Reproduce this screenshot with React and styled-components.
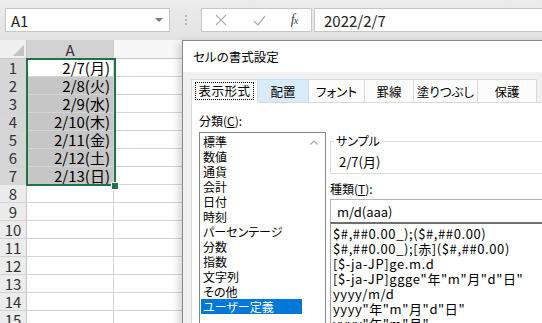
import styled, { createGlobalStyle } from "styled-components";

const GlobalStyle = createGlobalStyle`
  html, body { margin: 0; padding: 0; }
  body {
    font-family: "Noto Sans CJK JP", "Noto Sans", sans-serif;
    background: #fff;
    color: #000;
  }
`;

const Screen = styled.div`
  position: relative;
  width: 542px;
  height: 323px;
  overflow: hidden;
  background: #fff;
  display: flex;
  flex-direction: column;
`;

/* ---------- formula bar ---------- */

const FormulaBar = styled.div`
  flex: none;
  height: 40px;
  box-sizing: border-box;
  display: flex;
  align-items: flex-start;
  padding: 8px 0 0 5px;
  background: linear-gradient(#ebebeb, #e4e4e4);
`;

const NameBox = styled.div`
  width: 165px;
  height: 24px;
  box-sizing: border-box;
  background: #fff;
  border: 1px solid #c6c6c6;
  display: flex;
  align-items: center;
  justify-content: space-between;
  padding: 0 6px 0 5px;
  font-size: 15px;
  color: #222;
`;

const DropArrow = styled.span`
  width: 0;
  height: 0;
  border-left: 4px solid transparent;
  border-right: 4px solid transparent;
  border-top: 4px solid #7a7a7a;
`;

const Grip = styled.div`
  width: 31px;
  height: 24px;
  display: flex;
  flex-direction: column;
  align-items: center;
  justify-content: center;
  gap: 2px;
`;

const GripDot = styled.span`
  width: 2px;
  height: 2px;
  background: #b4b4b4;
`;

const FxBox = styled.div`
  width: 111px;
  height: 24px;
  box-sizing: border-box;
  background: #fff;
  border: 1px solid #c6c6c6;
  display: flex;
  align-items: center;
`;

const FxSlot = styled.div`
  width: ${(p) => p.w}px;
  display: flex;
  justify-content: center;
  align-items: center;
  color: ${(p) => (p.dim ? "#b0b0b0" : "#444")};
`;

const FxText = styled.span`
  font-family: "Liberation Serif", serif;
  font-style: italic;
  font-size: 14px;
  letter-spacing: -1px;
  sub {
    font-size: 10px;
    vertical-align: baseline;
  }
`;

const FormulaInput = styled.div`
  flex: 1;
  margin-left: 2px;
  height: 24px;
  box-sizing: border-box;
  background: #fff;
  border: 1px solid #c6c6c6;
  border-right: none;
  display: flex;
  align-items: center;
  padding-left: 9px;
  font-size: 15px;
  color: #222;
`;

/* ---------- sheet ---------- */

const Sheet = styled.div`
  position: relative;
  flex: 1;
  display: grid;
  grid-template-columns: 27px 87px 1fr;
  grid-template-rows: 19px;
  grid-auto-rows: 18px;
`;

const Corner = styled.div`
  box-sizing: border-box;
  background: #efefef;
  border-right: 1px solid #c8c8c8;
  border-bottom: 1px solid #c8c8c8;
  display: flex;
  align-items: flex-end;
  justify-content: flex-end;
  padding: 0 2px 2px 0;
`;

const CornerMark = styled.span`
  width: 0;
  height: 0;
  border-left: 11px solid transparent;
  border-bottom: 11px solid #c4c4c4;
`;

const ColHeader = styled.div`
  box-sizing: border-box;
  background: ${(p) => (p.active ? "#d2d2d2" : "#f7f7f7")};
  border-right: 1px solid #c8c8c8;
  border-bottom: 1px solid #c8c8c8;
  display: flex;
  align-items: center;
  justify-content: center;
  font-size: 15px;
  color: #333;
`;

const RowHeader = styled.div`
  box-sizing: border-box;
  background: ${(p) => (p.active ? "#d6d6d6" : "#ececec")};
  border-right: 1px solid #c8c8c8;
  border-bottom: 1px solid #d4d4d4;
  display: flex;
  align-items: center;
  justify-content: center;
  font-size: 15px;
  color: #333;
`;

const Cell = styled.div`
  box-sizing: border-box;
  background: ${(p) => (p.selected ? "#c6c6c6" : "#fff")};
  border-right: 1px solid #d4d4d4;
  border-bottom: 1px solid #d4d4d4;
  display: flex;
  align-items: center;
  justify-content: flex-end;
  padding-right: 3px;
  font-size: 15px;
  white-space: nowrap;
`;

const Selection = styled.div`
  position: absolute;
  left: 26px;
  top: 18px;
  width: 90px;
  height: 128px;
  box-sizing: border-box;
  border: 2px solid #217346;
  pointer-events: none;
`;

const FillHandle = styled.div`
  position: absolute;
  left: 111px;
  top: 142px;
  width: 6px;
  height: 6px;
  background: #217346;
  border: 1px solid #fff;
`;

/* ---------- dialog ---------- */

const Dialog = styled.div`
  position: absolute;
  left: 182px;
  top: 40px;
  width: 380px;
  height: 300px;
  box-sizing: border-box;
  border: 1px solid #8a8a8a;
  background: #f0f0f0;
  box-shadow: -3px 2px 8px rgba(0, 0, 0, 0.18);
  display: flex;
  flex-direction: column;
  font-size: 12px;
  font-feature-settings: "palt";
`;

const TitleBar = styled.div`
  height: 31px;
  flex: none;
  background: #fff;
  display: flex;
  align-items: center;
  padding-left: 10px;
  font-size: 12.5px;
`;

const DialogBody = styled.div`
  flex: 1;
  display: flex;
  flex-direction: column;
  padding: 7px 0 0 8px;
`;

const TabStrip = styled.div`
  display: flex;
  height: 24px;
  position: relative;
  z-index: 1;
`;

const Tab = styled.div`
  width: ${(p) => p.w}px;
  box-sizing: border-box;
  display: flex;
  align-items: center;
  justify-content: center;
  background: ${(p) => (p.active ? "#fff" : p.hover ? "#d9ebf9" : "#fcfcfc")};
  border: 1px solid ${(p) => (p.hover ? "#c5ddf2" : "#d9d9d9")};
  border-left: ${(p) => (p.active ? "1px solid #d9d9d9" : "none")};
  border-bottom: ${(p) => (p.active ? "1px solid #fff" : "1px solid #d9d9d9")};
  font-size: 12.5px;
`;

const FocusText = styled.span`
  border: 1px dotted #000;
  padding: 0 2px;
  line-height: 16px;
  letter-spacing: 0.5px;
`;

const TabPage = styled.div`
  flex: 1;
  margin-top: -1px;
  background: #fff;
  border: 1px solid #d9d9d9;
  border-right: none;
  display: flex;
  gap: 4px;
  padding: 10px 0 0 7px;
`;

const LeftCol = styled.div`
  width: 127px;
  display: flex;
  flex-direction: column;
`;

const RightCol = styled.div`
  flex: 1;
  display: flex;
  flex-direction: column;
`;

const Label = styled.div`
  line-height: 16px;
  margin-top: ${(p) => p.mt || 0}px;
`;

const ListBox = styled.div`
  flex: 1;
  margin-top: 3px;
  border: 1px solid #828790;
  border-bottom: none;
  display: flex;
  padding-top: 1px;
`;

const ListItems = styled.div`
  flex: 1;
  display: flex;
  flex-direction: column;
`;

const ListItem = styled.div`
  width: 101px;
  margin-left: 1px;
  padding-left: 2px;
  box-sizing: border-box;
  line-height: 15px;
  height: 15px;
  white-space: nowrap;
  background: ${(p) => (p.selected ? "#0078d7" : "transparent")};
  color: ${(p) => (p.selected ? "#fff" : "#000")};
`;

const ScrollTrack = styled.div`
  width: 24px;
  display: flex;
  justify-content: center;
  padding-top: 6px;
`;

const SampleGroup = styled.fieldset`
  margin: 20px 0 0 0;
  padding: 5px 0 3px 8px;
  border: 1px solid #dcdcdc;
  border-right: none;
  min-inline-size: 0;
`;

const SampleLegend = styled.legend`
  padding: 0 2px;
  margin-left: -5px;
  line-height: 16px;
`;

const SampleValue = styled.div`
  line-height: 16px;
  font-size: 13px;
`;

const FormatInput = styled.div`
  margin-top: 2px;
  height: 23px;
  box-sizing: border-box;
  border: 1px solid #b5b5b5;
  border-right: none;
  border-bottom: none;
  display: flex;
  align-items: center;
  padding-left: 6px;
  font-size: 13px;
`;

const FormatList = styled.div`
  flex: 1;
  border: 1px solid #a0a0a0;
  border-top: 2px solid #6e6e6e;
  border-right: none;
  border-bottom: none;
  padding: 2px 0 0 2px;
`;

const FormatItem = styled.div`
  line-height: 15px;
  height: 15px;
  white-space: nowrap;
  font-size: 13px;
  letter-spacing: 0.6px;
`;

const dates = ["2/7(月)", "2/8(火)", "2/9(水)", "2/10(木)", "2/11(金)", "2/12(土)", "2/13(日)"];

const categories = [
  "標準",
  "数値",
  "通貨",
  "会計",
  "日付",
  "時刻",
  "パーセンテージ",
  "分数",
  "指数",
  "文字列",
  "その他",
  "ユーザー定義",
];

const formats = [
  "$#,##0.00_);($#,##0.00)",
  "$#,##0.00_);[赤]($#,##0.00)",
  "[$-ja-JP]ge.m.d",
  '[$-ja-JP]ggge"年"m"月"d"日"',
  "yyyy/m/d",
  'yyyy"年"m"月"d"日"',
  'yyyy"年"m"月"',
];

const tabs = [
  { label: "表示形式", w: 67, active: true },
  { label: "配置", w: 51, hover: true },
  { label: "フォント", w: 56 },
  { label: "罫線", w: 49 },
  { label: "塗りつぶし", w: 64 },
  { label: "保護", w: 59 },
];

const CrossIcon = () => (
  <svg width="12" height="12" viewBox="0 0 12 12">
    <path d="M1 1 L11 11 M11 1 L1 11" stroke="currentColor" strokeWidth="1.2" fill="none" />
  </svg>
);

const CheckIcon = () => (
  <svg width="13" height="11" viewBox="0 0 13 11">
    <path d="M1 6 L5 10 L12 1" stroke="currentColor" strokeWidth="1.4" fill="none" />
  </svg>
);

const ChevronUp = () => (
  <svg width="8" height="5" viewBox="0 0 8 5">
    <path d="M0.5 4.5 L4 1 L7.5 4.5" stroke="#a8a8a8" strokeWidth="1.2" fill="none" />
  </svg>
);

export default function App() {
  const rows = Array.from({ length: 15 }, (_, i) => i + 1);
  return (
    <Screen>
      <GlobalStyle />
      <FormulaBar>
        <NameBox>
          A1
          <DropArrow />
        </NameBox>
        <Grip>
          <GripDot />
          <GripDot />
          <GripDot />
        </Grip>
        <FxBox>
          <FxSlot w={38} dim>
            <CrossIcon />
          </FxSlot>
          <FxSlot w={38} dim>
            <CheckIcon />
          </FxSlot>
          <FxSlot w={32}>
            <FxText>
              f<sub>x</sub>
            </FxText>
          </FxSlot>
        </FxBox>
        <FormulaInput>2022/2/7</FormulaInput>
      </FormulaBar>

      <Sheet>
        <Corner>
          <CornerMark />
        </Corner>
        <ColHeader active>A</ColHeader>
        <ColHeader>B</ColHeader>
        {rows.map((r) => [
          <RowHeader key={`h${r}`} active={r <= 7}>
            {r}
          </RowHeader>,
          <Cell key={`a${r}`} selected={r >= 2 && r <= 7}>
            {dates[r - 1] || ""}
          </Cell>,
          <Cell key={`b${r}`} />,
        ])}
        <Selection />
        <FillHandle />
      </Sheet>

      <Dialog>
        <TitleBar>セルの書式設定</TitleBar>
        <DialogBody>
          <TabStrip>
            {tabs.map((t) => (
              <Tab key={t.label} w={t.w} active={t.active} hover={t.hover}>
                {t.active ? <FocusText>{t.label}</FocusText> : t.label}
              </Tab>
            ))}
          </TabStrip>
          <TabPage>
            <LeftCol>
              <Label>
                分類(<u>C</u>):
              </Label>
              <ListBox>
                <ListItems>
                  {categories.map((c) => (
                    <ListItem key={c} selected={c === "ユーザー定義"}>
                      {c}
                    </ListItem>
                  ))}
                </ListItems>
                <ScrollTrack>
                  <ChevronUp />
                </ScrollTrack>
              </ListBox>
            </LeftCol>
            <RightCol>
              <SampleGroup>
                <SampleLegend>サンプル</SampleLegend>
                <SampleValue>2/7(月)</SampleValue>
              </SampleGroup>
              <Label mt={7}>
                種類(<u>T</u>):
              </Label>
              <FormatInput>m/d(aaa)</FormatInput>
              <FormatList>
                {formats.map((f) => (
                  <FormatItem key={f}>{f}</FormatItem>
                ))}
              </FormatList>
            </RightCol>
          </TabPage>
        </DialogBody>
      </Dialog>
    </Screen>
  );
}
